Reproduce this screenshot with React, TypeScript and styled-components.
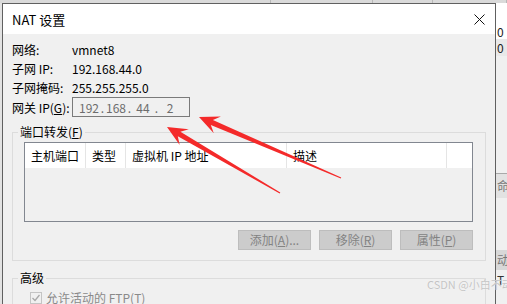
import { ReactElement } from 'react'
import styled, { createGlobalStyle } from 'styled-components'

const GlobalStyle = createGlobalStyle`
  html, body {
    margin: 0;
    padding: 0;
  }
  body {
    font-family: "Noto Sans CJK SC", "Noto Sans", sans-serif;
    font-size: 12px;
    color: #000;
  }
`

const Screen = styled.div`
  position: relative;
  width: 507px;
  height: 304px;
  overflow: hidden;
  display: flex;
  flex-direction: column;
  background: #f0f0f0;
`

const TopBar = styled.div`
  height: 3px;
  flex: none;
  display: flex;
  background: #dadada;
`

const TopCell = styled.div<{ $w?: number }>`
  flex: ${({ $w }) => ($w ? `0 0 ${$w}px` : '1')};
  border-right: 1px solid #b8b8b8;
`

const Desk = styled.div`
  flex: 1;
  display: flex;
  min-height: 0;
`

const LeftStrip = styled.div`
  width: 2px;
  flex: none;
  background: #e2e2e2;
`

const RightStrip = styled.div`
  flex: 1;
  display: flex;
  flex-direction: column;
  overflow: hidden;
`

const BgRow = styled.div<{ $h?: number; $bg: string; $color?: string; $line?: boolean }>`
  height: ${({ $h }) => ($h ? `${$h}px` : 'auto')};
  flex: ${({ $h }) => ($h ? 'none' : '1')};
  background: ${({ $bg }) => $bg};
  color: ${({ $color }) => $color || '#222'};
  border-top: ${({ $line }) => ($line ? '1px solid #a9a9a9' : 'none')};
  font-size: 12px;
  line-height: ${({ $h }) => ($h ? `${$h}px` : '20px')};
  padding-left: 1px;
  white-space: nowrap;
`

const Dialog = styled.div`
  width: 494px;
  flex: none;
  box-sizing: border-box;
  border: 1px solid #606060;
  border-bottom: none;
  background: #f0f0f0;
  display: flex;
  flex-direction: column;
`

const TitleBar = styled.div`
  height: 30px;
  flex: none;
  background: #fff;
  display: flex;
  align-items: center;
  justify-content: space-between;
  padding: 0 10px 0 9px;
`

const Title = styled.span`
  font-size: 13px;
`

const Body = styled.div`
  padding: 6px 9px 0;
  display: flex;
  flex-direction: column;
`

const InfoGrid = styled.div`
  display: grid;
  grid-template-columns: 60px auto;
  grid-auto-rows: 19px;
  align-items: center;
`

const GatewayRow = styled.div`
  display: grid;
  grid-template-columns: 60px auto;
  align-items: center;
  height: 20px;
`

const IpBox = styled.div`
  width: 118px;
  height: 20px;
  box-sizing: border-box;
  border: 1px solid #7a7a7a;
  background: #f0f0f0;
  display: flex;
  align-items: center;
  padding-left: 6px;
  color: #6d6d6d;
`

const Octet = styled.span`
  width: 20px;
  text-align: center;
`

const Dot = styled.span`
  width: 7px;
  text-align: center;
`

const Group = styled.fieldset<{ $top: number }>`
  margin: ${({ $top }) => $top}px 0 0;
  padding: 3px 12px 10px 5px;
  border: 1px solid #dcdcdc;
  min-width: 0;
`

const Legend = styled.legend`
  padding: 0 2px;
  line-height: 14px;
`

const GroupInner = styled.div`
  padding-left: 6px;
  display: flex;
  flex-direction: column;
`

const Table = styled.div`
  height: 80px;
  box-sizing: border-box;
  border: 1px solid #828790;
  background: #f0f0f0;
`

const HeaderRow = styled.div`
  display: flex;
  height: 25px;
  background: #fff;
`

const HeaderCell = styled.div<{ $w?: number }>`
  flex: ${({ $w }) => ($w ? `0 0 ${$w}px` : '1')};
  box-sizing: border-box;
  border-right: ${({ $w }) => ($w ? '1px solid #e5e5e5' : 'none')};
  padding-left: 6px;
  line-height: 25px;
  white-space: nowrap;
`

const ButtonRow = styled.div`
  display: flex;
  justify-content: flex-end;
  gap: 8px;
  margin-top: 8px;
`

const Button = styled.button`
  width: 73px;
  height: 20px;
  box-sizing: border-box;
  margin: 0;
  padding: 0;
  background: #cccccc;
  border: 1px solid #bdbdbd;
  color: #838383;
  font: inherit;
  line-height: 18px;
`

const CheckRow = styled.div`
  display: flex;
  align-items: center;
  gap: 4px;
  padding: 1px 0 0 6px;
  color: #8a8a8a;
`

const CheckBox = styled.span`
  width: 12px;
  height: 12px;
  box-sizing: border-box;
  border: 1px solid #c4c4c4;
  background: #f0f0f0;
  display: flex;
  align-items: center;
  justify-content: center;
`

const Overlay = styled.svg`
  position: absolute;
  left: 0;
  top: 0;
  pointer-events: none;
`

const Watermark = styled.div`
  position: absolute;
  left: 427px;
  top: 276px;
  font-size: 11px;
  color: #c4c4c4;
  text-shadow: 0 0 1px #fff;
  white-space: nowrap;
`

const arrowPoints = (tx: number, ty: number, px: number, py: number): string => {
  const len = Math.hypot(px - tx, py - ty)
  const ux = (px - tx) / len
  const uy = (py - ty) / len
  const nx = -uy
  const ny = ux
  const at = (back: number, side: number) => [px - ux * back + nx * side, py - uy * back + ny * side]
  const pts = [
    [tx + nx * 0.6, ty + ny * 0.6],
    at(14, 2.6),
    at(20, 9),
    [px, py],
    at(20, -9),
    at(14, -2.6),
    [tx - nx * 0.6, ty - ny * 0.6],
  ]
  return pts.map((p) => p.map((v) => v.toFixed(1)).join(',')).join(' ')
}

const App = (): ReactElement => (
  <>
    <GlobalStyle />
    <Screen>
      <TopBar>
        <TopCell $w={270} />
        <TopCell $w={101} />
        <TopCell $w={59} />
        <TopCell />
      </TopBar>
      <Desk>
        <LeftStrip />
        <Dialog>
          <TitleBar>
            <Title>NAT 设置</Title>
            <svg width="11" height="11" viewBox="0 0 11 11">
              <path d="M0.5 0.5 L10.5 10.5 M10.5 0.5 L0.5 10.5" stroke="#111" strokeWidth="1" />
            </svg>
          </TitleBar>
          <Body>
            <InfoGrid>
              <span>网络:</span>
              <span>vmnet8</span>
              <span>子网 IP:</span>
              <span>192.168.44.0</span>
              <span>子网掩码:</span>
              <span>255.255.255.0</span>
            </InfoGrid>
            <GatewayRow>
              <span>
                网关 IP(<u>G</u>):
              </span>
              <IpBox>
                <Octet>192</Octet>
                <Dot>.</Dot>
                <Octet>168</Octet>
                <Dot>.</Dot>
                <Octet>44</Octet>
                <Dot>.</Dot>
                <Octet>2</Octet>
              </IpBox>
            </GatewayRow>
            <Group $top={8}>
              <Legend>
                端口转发(<u>F</u>)
              </Legend>
              <GroupInner>
                <Table>
                  <HeaderRow>
                    <HeaderCell $w={61}>主机端口</HeaderCell>
                    <HeaderCell $w={40}>类型</HeaderCell>
                    <HeaderCell $w={161}>虚拟机 IP 地址</HeaderCell>
                    <HeaderCell $w={160}>描述</HeaderCell>
                    <HeaderCell />
                  </HeaderRow>
                </Table>
                <ButtonRow>
                  <Button disabled>
                    添加(<u>A</u>)...
                  </Button>
                  <Button disabled>
                    移除(<u>R</u>)
                  </Button>
                  <Button disabled>
                    属性(<u>P</u>)
                  </Button>
                </ButtonRow>
              </GroupInner>
            </Group>
            <Group $top={10}>
              <Legend>高级</Legend>
              <GroupInner>
                <CheckRow>
                  <CheckBox>
                    <svg width="10" height="10" viewBox="0 0 10 10">
                      <path d="M1.5 5 L4 7.5 L8.5 2" fill="none" stroke="#a8a8a8" strokeWidth="1.3" />
                    </svg>
                  </CheckBox>
                  <span>
                    允许活动的 FTP(<u>T</u>)
                  </span>
                </CheckRow>
              </GroupInner>
            </Group>
          </Body>
        </Dialog>
        <RightStrip>
          <BgRow $h={21} $bg="#fff" />
          <BgRow $h={15} $bg="#fff">
            0
          </BgRow>
          <BgRow $h={17} $bg="#e9e9e9">
            0
          </BgRow>
          <BgRow $h={117} $bg="#f0f0f0" />
          <BgRow $h={24} $bg="#e2e2e2" $color="#777" $line>
            命
          </BgRow>
          <BgRow $h={52} $bg="#f0f0f0" />
          <BgRow $h={20} $bg="#d8d8d8" $color="#777">
            动
          </BgRow>
          <BgRow $bg="#f0f0f0" $color="#333">
            T
          </BgRow>
        </RightStrip>
      </Desk>
      <Overlay width="507" height="304" viewBox="0 0 507 304">
        <polygon points={arrowPoints(341, 178, 199, 117)} fill="#f42a2a" />
        <polygon points={arrowPoints(280, 193, 167, 127)} fill="#f42a2a" />
      </Overlay>
      <Watermark>CSDN @小白不动</Watermark>
    </Screen>
  </>
)

export default App
